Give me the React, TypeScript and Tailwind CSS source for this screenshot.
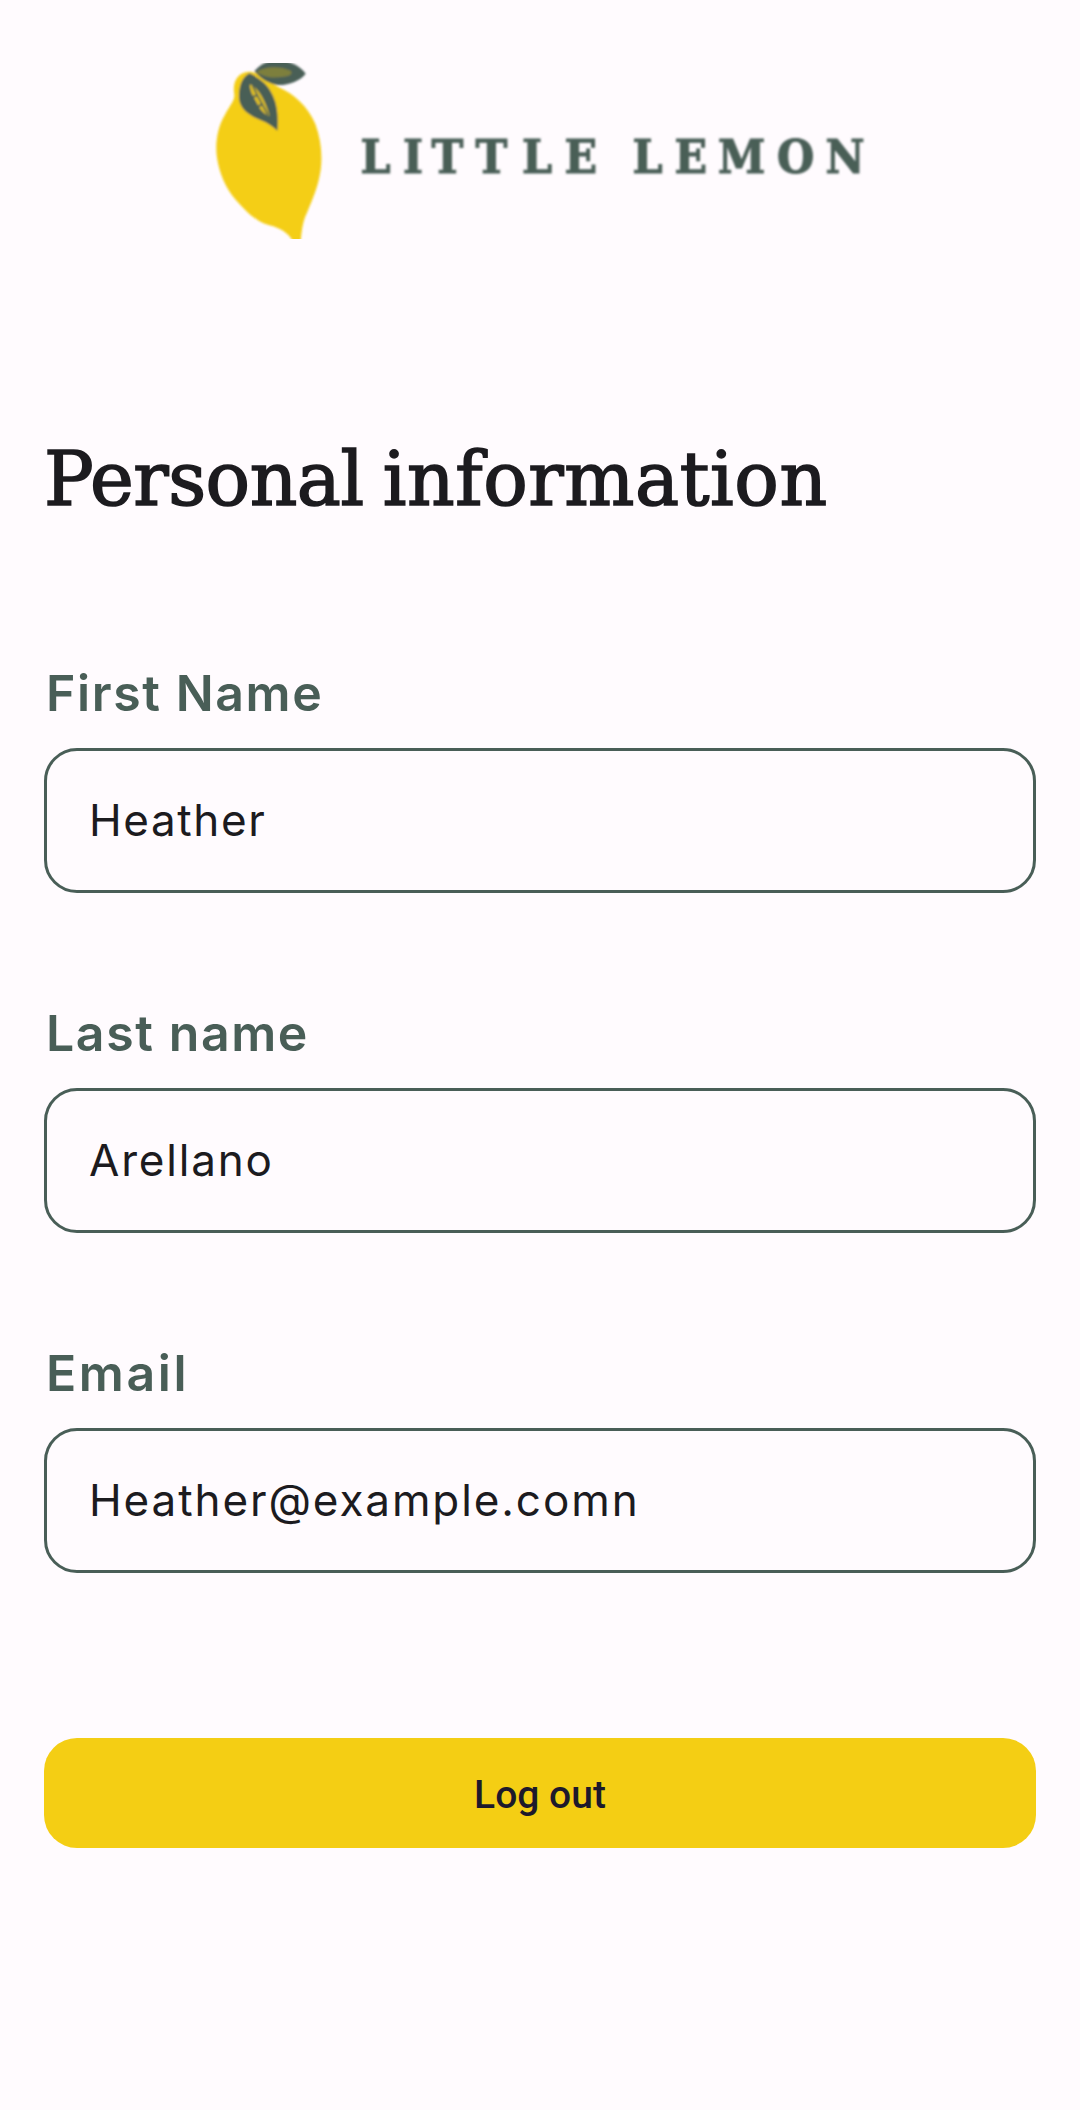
function Logo() {
  return (
    <svg
      className="h-44 w-[670px] shrink-0"
      viewBox="205 63 670 176"
      role="img"
      aria-label="Little Lemon"
    >
      <defs>
        <filter id="soften" x="-5%" y="-20%" width="110%" height="140%">
          <feGaussianBlur stdDeviation="1" />
        </filter>
        <filter id="soften-fruit" x="-5%" y="-5%" width="110%" height="110%">
          <feGaussianBlur stdDeviation="3.2" />
        </filter>
      </defs>
      <g transform="translate(200 50) scale(0.33333)">
        <g filter="url(#soften-fruit)">
          <path
            d="M103 135 C96 95 113 65 151 65 C180 68 205 94 235 111 C283 132 324 170 346 222 C362 265 368 313 362 360 C355 408 339 445 321 488 C309 512 304 540 301 590 L280 575 C264 548 241 534 208 526 C168 515 139 485 107 449 C77 414 58 370 51 323 C45 281 52 232 75 194 C91 165 104 152 103 135Z"
            fill="#f4ce14"
          />
          <path
            d="M163 64 C181 42 204 30 239 30 C273 34 304 51 317 71 C301 92 267 106 233 105 C211 102 188 92 163 64Z"
            fill="#495e57"
          />
          <path
            d="M170 66 C196 48 239 48 272 62 C281 70 268 79 252 80 C222 84 196 85 170 66Z"
            fill="#7d7f3d"
          />
          <path
            d="M148 70 C125 83 116 110 117 145 C120 180 151 198 183 211 C203 218 217 229 232 242 C235 205 233 169 220 140 C207 107 182 85 148 70Z"
            fill="#495e57"
          />
          <path
            d="M149 103 C176 115 194 147 209 197 C193 196 176 174 171 160 C164 145 150 130 149 103Z"
            fill="#e0c01c"
          />
          <path d="M158 108 L174 140 L204 195" stroke="#495e57" strokeWidth="5" fill="none" />
          <path d="M155 143 L170 136 M172 172 L188 161" stroke="#495e57" strokeWidth="6" />
        </g>
      </g>
      <text
        x="360.5 403 431.5 475.5 522 564.5 600 632.5 674.5 718 777 825.5"
        y="173"
        fill="#495e57"
        stroke="#495e57"
        strokeWidth="1.1"
        filter="url(#soften)"
        className="font-['DejaVu_Serif_Condensed','DejaVu_Serif',serif] text-[47.5px] font-bold [font-stretch:condensed]"
      >
        LITTLE LEMON
      </text>
    </svg>
  );
}

type FieldProps = { id: string; label: string; value: string; labelClass: string; inputClass: string };

function Field({ id, label, value, labelClass, inputClass }: FieldProps) {
  return (
    <div className="flex h-[230px] flex-col">
      <label
        htmlFor={id}
        className={`h-[85px] pl-0.5 text-[50px] leading-[60px] font-semibold text-[#495e57] ${labelClass}`}
      >
        {label}
      </label>
      <input
        id={id}
        defaultValue={value}
        className={`h-[145px] w-full rounded-[33px] border-3 border-[#495e57] bg-transparent pb-0.5 pl-[42px] text-[44px] text-[#1c1b1f] outline-none ${inputClass}`}
      />
    </div>
  );
}

export default function App() {
  return (
    <main className="flex h-[2110px] w-[1080px] flex-col items-center bg-[#fffbfe] px-11 pt-[63px] font-['Inter',sans-serif]">
      <Logo />
      <h1 className="mt-[190px] h-[110px] w-full font-['DejaVu_Serif',serif] text-[74px] leading-[100px] font-normal whitespace-nowrap text-[#1c1b1f] [-webkit-text-stroke:1.6px_#1c1b1f]">
        <span className="tracking-[-0.5px] [word-spacing:-4px]">Personal </span>
        <span className="tracking-[0.6px]">information</span>
      </h1>
      <form className="mt-[124px] flex w-full flex-col gap-[110px]" onSubmit={(e) => e.preventDefault()}>
        <Field id="first" label="First Name" value="Heather" labelClass="tracking-[1.6px]" inputClass="tracking-[1.6px]" />
        <Field id="last" label="Last name" value="Arellano" labelClass="tracking-[1.6px]" inputClass="tracking-[1.8px]" />
        <Field id="email" label="Email" value="Heather@example.comn" labelClass="tracking-[2.6px]" inputClass="tracking-[1.9px]" />
        <button
          type="submit"
          className="mt-[55px] h-[110px] w-full rounded-[33px] bg-[#f4ce14] pt-1 font-['Roboto',sans-serif] text-[39px] font-medium text-[#1d192b]"
        >
          Log out
        </button>
      </form>
    </main>
  );
}
